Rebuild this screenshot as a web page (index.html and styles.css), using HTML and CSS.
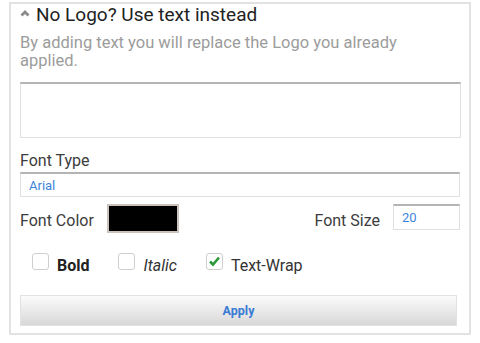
FILE: index.html
```html
<!DOCTYPE html>
<html lang="en">
<head>
    <meta charset="UTF-8">
    <title>Logo Text</title>
    <link rel="stylesheet" href="styles.css">
</head>
<body>
    <div class="panel">
        <h2 class="title">
            <svg class="caret" width="10" height="7" viewBox="0 0 10 7"><polyline points="1.5,5.5 5,2 8.5,5.5" fill="none" stroke="#8a8a8a" stroke-width="2.8"/></svg>
            No Logo? Use text instead
        </h2>
        <p class="hint">By adding text you will replace the Logo you already applied.</p>
        <textarea class="logo-text"></textarea>

        <label class="field-label" for="fontType">Font Type</label>
        <input class="field" type="text" id="fontType" value="Arial">

        <div class="color-row">
            <span class="row-label">Font Color</span>
            <span class="swatch"></span>
            <span class="row-label size-label">Font Size</span>
            <input class="field size-field" type="text" value="20">
        </div>

        <div class="check-row">
            <label class="check"><span class="box"></span><b>Bold</b></label>
            <label class="check"><span class="box"></span><i>Italic</i></label>
            <label class="check">
                <span class="box">
                    <svg width="13" height="11" viewBox="0 0 13 11"><polyline points="2,5.5 5,8.5 11,1.5" fill="none" stroke="#2b9a3b" stroke-width="2.6"/></svg>
                </span><span>Text-Wrap</span>
            </label>
        </div>

        <button class="apply" type="button">Apply</button>
    </div>
</body>
</html>
```

FILE: styles.css
```css
body {
    margin: 0;
    font-family: Roboto, "Liberation Sans", sans-serif;
    background: #fff;
}
.panel {
    margin: 2px 9px 0 9px;
    border: 2px solid #e2e2e2;
    padding: 0 8px 7px 9px;
}
.title {
    margin: 0;
    font-size: 19px;
    font-weight: normal;
    line-height: 22px;
    color: #222;
    display: flex;
    align-items: center;
}
.caret {
    margin-right: 6px;
    margin-top: -3px;
}
.hint {
    max-width: 410px;
    margin: 8px 0 0;
    font-size: 16.5px;
    line-height: 18px;
    color: #9c9c9c;
}
.logo-text {
    display: block;
    width: 100%;
    height: 56px;
    margin-top: 12px;
    box-sizing: border-box;
    border: 1px solid #e0e0e0;
    border-top: 2px solid #b4b4b4;
    resize: none;
}
.field-label {
    display: block;
    margin-top: 14px;
    font-size: 16px;
    line-height: 18px;
    color: #3c3c3c;
}
.field {
    display: block;
    width: calc(100% - 1px);
    height: 25px;
    margin-top: 2px;
    box-sizing: border-box;
    border: 1px solid #e0e0e0;
    border-top: 2px solid #b4b4b4;
    padding: 0 8px;
    font-family: Roboto, "Liberation Sans", sans-serif;
    font-size: 13px;
    color: #3d85d8;
}
.color-row {
    display: flex;
    align-items: flex-start;
    margin-top: 7px;
}
.row-label {
    padding-top: 8px;
    font-size: 16px;
    line-height: 18px;
    color: #3c3c3c;
}
.swatch {
    width: 72px;
    height: 29px;
    margin-left: 13px;
    box-sizing: border-box;
    background: #000;
    border: 2px solid #cbc3bb;
}
.size-label {
    margin-left: auto;
}
.size-field {
    width: 67px;
    height: 26px;
    margin: 0 1px 0 13px;
}
.check-row {
    display: flex;
    gap: 29px;
    margin-top: 20px;
    padding-left: 12px;
}
.check {
    display: flex;
    align-items: flex-start;
    gap: 8px;
    font-size: 16px;
    line-height: 18px;
    color: #333;
}
.check b,
.check i,
.check span:last-child {
    padding-top: 4px;
}
.check b {
    color: #222;
}
.check .box {
    width: 17px;
    height: 17px;
    padding: 0;
    box-sizing: border-box;
    border: 1.5px solid #cfcfcf;
    border-radius: 3px;
    display: flex;
    align-items: center;
    justify-content: center;
}
.apply {
    display: block;
    width: 437px;
    height: 31px;
    margin-top: 20px;
    border: 1px solid #e2e2e2;
    background: linear-gradient(#fbfbfb, #d8d8d8);
    font-family: Roboto, "Liberation Sans", sans-serif;
    font-size: 12.5px;
    font-weight: bold;
    color: #3a7bd5;
}
```
